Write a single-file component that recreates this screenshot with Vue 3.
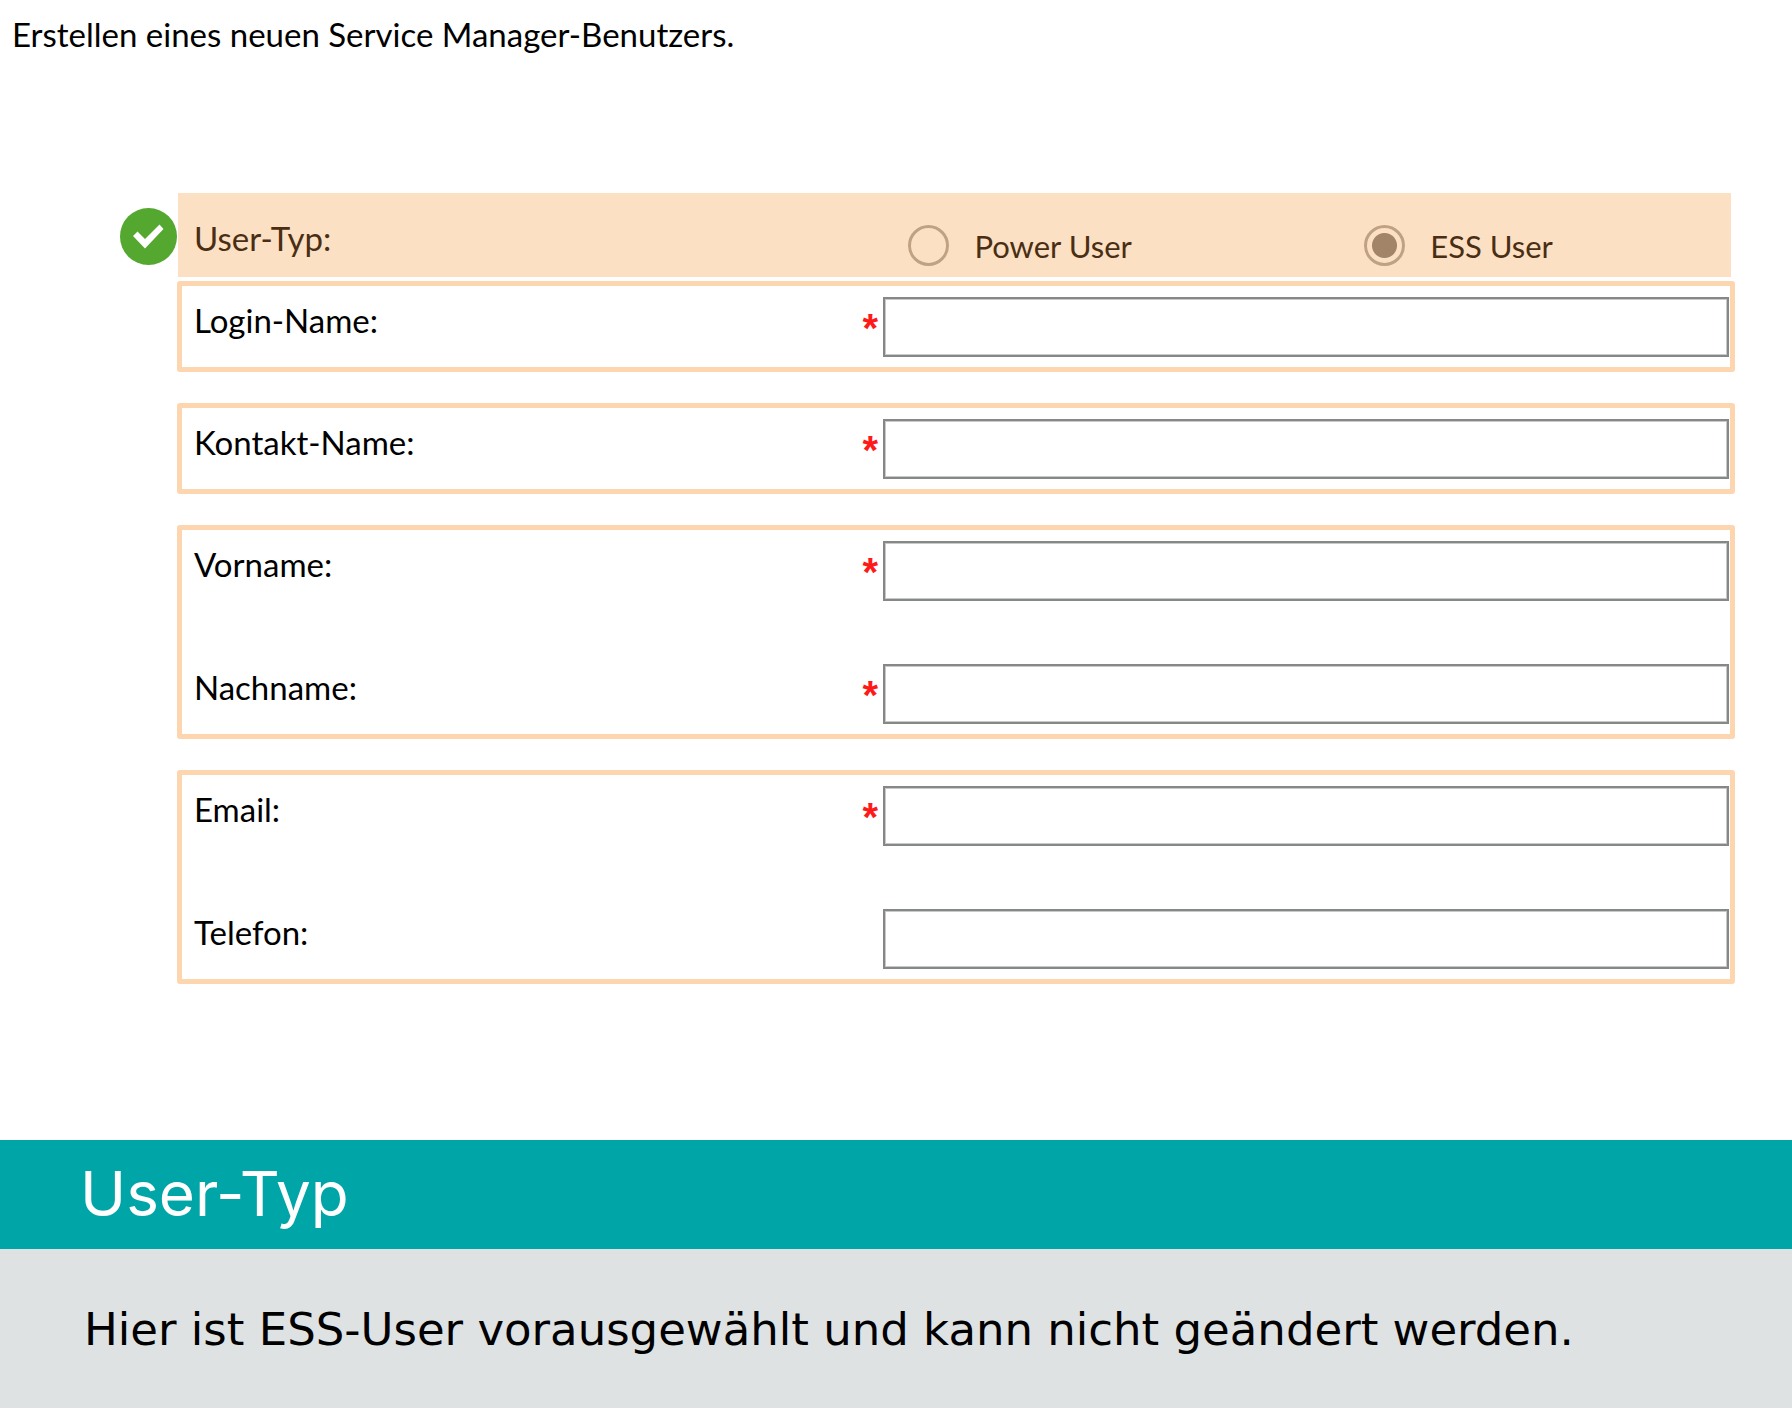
<script setup>
import { ref } from 'vue'

const userType = ref('ess')

const userTypes = [
  { value: 'power', label: 'Power User' },
  { value: 'ess', label: 'ESS User' },
]

const groups = ref([
  [{ id: 'login', label: 'Login-Name:', required: true, value: '' }],
  [{ id: 'contact', label: 'Kontakt-Name:', required: true, value: '' }],
  [
    { id: 'firstname', label: 'Vorname:', required: true, value: '' },
    { id: 'lastname', label: 'Nachname:', required: true, value: '' },
  ],
  [
    { id: 'email', label: 'Email:', required: true, value: '' },
    { id: 'phone', label: 'Telefon:', required: false, value: '' },
  ],
])
</script>

<template>
  <div class="page">
    <main class="content">
      <h1 class="title">Erstellen eines neuen Service Manager-Benutzers.</h1>

      <form class="form" @submit.prevent>
        <div class="type-band" role="radiogroup" aria-labelledby="type-label">
          <svg class="badge" viewBox="0 0 57 57" aria-hidden="true">
            <circle cx="28.5" cy="28.5" r="28.5" fill="#54a82f" />
            <path d="M13 28 17.500 23.500 25 31 39.500 16.500 43.500 21 25 40.500Z" fill="#fff" />
          </svg>
          <span id="type-label" class="type-label">User-Typ:</span>
          <div class="options">
            <label v-for="type in userTypes" :key="type.value" class="option">
              <input v-model="userType" class="radio" type="radio" name="user-type" :value="type.value" disabled />
              {{ type.label }}
            </label>
          </div>
        </div>

        <div class="groups">
          <div v-for="group in groups" :key="group[0].id" class="group">
            <div v-for="field in group" :key="field.id" class="row">
              <div class="caption">
                <label class="label" :for="field.id">{{ field.label }}</label>
                <span v-if="field.required" class="star" aria-hidden="true">*</span>
              </div>
              <input :id="field.id" v-model="field.value" class="field" type="text" :required="field.required" />
            </div>
          </div>
        </div>
      </form>
    </main>

    <section class="info">
      <h2 class="info-title">User-Typ</h2>
      <p class="info-text">Hier ist ESS-User vorausgewählt und kann nicht geändert werden.</p>
    </section>
  </div>
</template>

<style>
body {
  margin: 0;
  background: #fff;
}
</style>

<style scoped>
.page {
  display: flex;
  flex-direction: column;
  min-height: 100vh;
  color: #000;
  font-family: Lato, "Liberation Sans", sans-serif;
  font-size: 33px;
  line-height: 40px;
}

.content {
  padding: 14px 57px 156px 12px;
}

.title {
  margin: 0 0 139px;
  font-size: 33px;
  font-weight: 400;
}

.form {
  margin-left: 165px;
}

.type-band {
  position: relative;
  display: grid;
  grid-template-columns: 29fr 35fr;
  box-sizing: border-box;
  min-height: 84px;
  margin: 0 4px 4px 1px;
  padding: 0 1px 0 4px;
  background: #fce0c4;
  color: #4a2e14;
}

.badge {
  position: absolute;
  top: 15px;
  left: -58px;
  width: 57px;
  height: 57px;
}

.type-label {
  padding: 25px 0 0 12px;
}

.options {
  display: grid;
  grid-template-columns: 7fr 6fr;
  align-items: start;
  padding-top: 32px;
}

.option {
  display: flex;
  align-items: center;
  gap: 25px;
  padding-left: 25px;
  font-size: 31px;
}

.radio {
  appearance: none;
  flex: none;
  width: 41px;
  height: 41px;
  margin: 0;
  border: 3px solid #bfa283;
  border-radius: 50%;
}

.radio:checked {
  background: radial-gradient(circle, #a28568 12px, transparent 13px);
}

.groups {
  display: flex;
  flex-direction: column;
  gap: 31px;
}

.group {
  display: flex;
  flex-direction: column;
  gap: 63px;
  padding: 11px 1px 10px 0;
  border: 5px solid #fdd5ae;
  border-radius: 3px;
}

.row {
  display: grid;
  grid-template-columns: 29fr 35fr;
}

.caption {
  display: flex;
  justify-content: space-between;
  padding: 3px 5px 0 12px;
}

.star {
  padding-top: 8px;
  color: #ff1a1a;
  font-family: "Liberation Sans", sans-serif;
  font-size: 40px;
  font-weight: 700;
}

.field {
  box-sizing: border-box;
  width: 100%;
  height: 60px;
  padding: 0 12px;
  border: 2px solid #868888;
  border-radius: 0;
  outline: 0;
  background: #fff;
  box-shadow: inset 0 0 0 1px #c8caca;
  color: inherit;
  font: inherit;
}

.info {
  display: flex;
  flex: 1;
  flex-direction: column;
  background: #dee2e3;
}

.info-title {
  margin: 0;
  padding: 16px 80px 17px;
  background: #00a6a7;
  color: #fff;
  font-family: Inter, "DejaVu Sans", sans-serif;
  font-size: 62px;
  font-weight: 400;
  line-height: 76px;
}

.info-text {
  margin: 0;
  padding: 53px 84px;
  font-family: "DejaVu Sans", sans-serif;
  font-size: 45px;
  line-height: 56px;
}
</style>
